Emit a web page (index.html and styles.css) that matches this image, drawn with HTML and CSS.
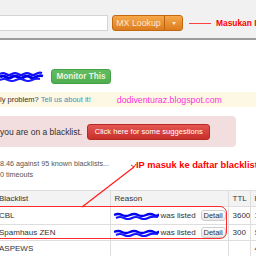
FILE: index.html
```html
<!DOCTYPE html>
<html>
<head>
<meta charset="utf-8">
<link rel="stylesheet" href="styles.css">
</head>
<body>
<header class="top">
  <div class="search">
    <div class="input"></div>
    <div class="btn-group">
      <span class="btn-main">MX Lookup</span>
      <span class="btn-caret"><span class="tri"></span></span>
    </div>
    <span class="note-line"></span>
    <span class="note">Masukan IP</span>
  </div>
</header>

<section class="ip-row">
  <svg class="scribble" width="44" height="14" viewBox="0 0 44 14">
    <path d="M0 4 Q3 2 6 4 T12 4 T18 4 T24 4 T30 4 T36 4 T42 3" fill="none" stroke="#1010ff" stroke-width="2.2"/>
    <path d="M0 7 Q3 5 6 7 T12 7 T18 7 T24 7 T30 7 T36 7 T43 6" fill="none" stroke="#0000e8" stroke-width="2.8"/>
    <path d="M0 10 Q4 8 8 10 T16 10 T24 10 T32 10 T40 9" fill="none" stroke="#1a1aff" stroke-width="2.2"/>
  </svg>
  <span class="btn-green">Monitor This</span>
</section>

<div class="alert-yellow">
  <span class="problem">ly problem? <span class="link">Tell us about it!</span></span>
  <span class="blog">dodiventuraz.blogspot.com</span>
</div>

<div class="alert-pink">
  <span>you are on a blacklist.</span>
  <span class="btn-red">Click here for some suggestions</span>
</div>

<div class="summary">
  <p>8.46 against 95 known blacklists...</p>
  <p>0 timeouts</p>
</div>

<table class="results">
  <colgroup><col class="c1"><col class="c2"><col class="c3"><col class="c4"></colgroup>
  <tr class="head"><td>Blacklist</td><td>Reason</td><td>TTL</td><td>R</td></tr>
  <tr class="r1"><td>CBL</td><td><div class="reason">
    <svg class="scr2" width="45" height="8" viewBox="0 0 45 8"><path d="M0 3 Q4 1 8 3 T16 3 T24 3 T32 3 T40 3 T45 2" fill="none" stroke="#0000ee" stroke-width="2.4"/><path d="M2 6 Q6 4 10 6 T18 6 T26 6 T34 6 T44 5" fill="none" stroke="#1515ff" stroke-width="2.2"/></svg>
    <span>was listed</span><span class="btn-detail">Detail</span></div></td><td>3600</td><td>1</td></tr>
  <tr class="r2"><td>Spamhaus ZEN</td><td><div class="reason">
    <svg class="scr2" width="45" height="8" viewBox="0 0 45 8"><path d="M0 3 Q4 1 8 3 T16 3 T24 3 T32 3 T40 3 T45 2" fill="none" stroke="#0000ee" stroke-width="2.4"/><path d="M2 6 Q6 4 10 6 T18 6 T26 6 T34 6 T44 5" fill="none" stroke="#1515ff" stroke-width="2.2"/></svg>
    <span>was listed</span><span class="btn-detail">Detail</span></div></td><td>300</td><td>S</td></tr>
  <tr class="r3"><td>ASPEWS</td><td></td><td></td><td>4</td></tr>
</table>

<div class="annot-box"></div>
<svg class="annot-arrow" width="256" height="256" viewBox="0 0 256 256">
  <line x1="82" y1="207" x2="134" y2="167" stroke="#ff1a1a" stroke-width="1.2"/>
  <path d="M131 165 L134 167 L136 164" fill="none" stroke="#ff1a1a" stroke-width="1"/>
</svg>
<span class="annot-text">IP masuk ke daftar blacklist</span>
</body>
</html>
```

FILE: styles.css
```css
* { box-sizing: border-box; margin: 0; padding: 0; }
html, body { width: 256px; height: 256px; overflow: hidden; }
body {
  position: relative;
  font-family: "Liberation Sans", Arial, sans-serif;
  font-size: 8.5px;
  color: #333;
  background: #fff;
}

.top {
  height: 40px;
  background: #f1f1f1;
  border-bottom: 2px solid #9b9b9b;
  padding-top: 15px;
}
.search { display: flex; align-items: center; white-space: nowrap; }
.search > * { flex-shrink: 0; }
.input {
  width: 108px;
  height: 16px;
  background: #fff;
  border: 1px solid #d4d4d4;
  border-left: none;
}
.btn-group {
  display: flex;
  margin-left: 4px;
  height: 16px;
  border: 1px solid #c4690f;
  border-radius: 3px;
  background: linear-gradient(#f5a84a, #dc7c1e);
  overflow: hidden;
}
.btn-main {
  width: 52px;
  display: flex;
  align-items: center;
  justify-content: center;
  color: #fde8d2;
  font-size: 8.8px;
  border-right: 1px solid #b9650f;
}
.btn-caret {
  width: 17px;
  display: flex;
  align-items: center;
  justify-content: center;
}
.tri {
  border-left: 2.5px solid transparent;
  border-right: 2.5px solid transparent;
  border-top: 3px solid #fbe6d0;
}
.note-line { width: 22px; height: 1px; background: #ff4040; margin-left: 6px; }
.note { margin-left: 5px; color: #ff0000; font-weight: bold; font-size: 8.4px; }

.ip-row { display: flex; align-items: center; padding-top: 29px; }
.ip-row > * { flex-shrink: 0; }
.scribble { display: block; }
.btn-green {
  margin-left: 7px;
  width: 60px;
  height: 15px;
  display: flex;
  align-items: center;
  justify-content: center;
  background: linear-gradient(#62bd62, #4fae4f);
  border: 1px solid #44a044;
  border-radius: 3px;
  color: #e6f4e6;
  font-weight: bold;
  font-size: 8.2px;
}

.alert-yellow {
  margin-top: 8px;
  height: 15px;
  background: #fcf8e3;
  display: flex;
  align-items: center;
  white-space: nowrap;
  font-size: 7.5px;
}
.alert-yellow > * { flex-shrink: 0; }
.link { color: #3a8fbf; }
.blog { margin-left: 26px; color: #ff33dd; font-size: 8.8px; }

.alert-pink {
  margin-top: 9px;
  width: 236px;
  height: 31px;
  background: #f2dede;
  border-radius: 0 4px 4px 0;
  display: flex;
  align-items: center;
  white-space: nowrap;
  color: #2f2f2f;
}
.alert-pink > * { flex-shrink: 0; }
.btn-red {
  margin-left: 5px;
  width: 123px;
  height: 16px;
  display: flex;
  align-items: center;
  justify-content: center;
  background: linear-gradient(#e5554f, #c8302a);
  border: 1px solid #b52a25;
  border-radius: 3px;
  color: #fff;
  font-size: 7.6px;
}

.summary { padding-top: 11px; line-height: 11px; font-size: 7.2px; color: #555; }

.results {
  margin-top: 10px;
  margin-left: -2px;
  width: 272px;
  border-collapse: collapse;
  table-layout: fixed;
  font-size: 8px;
  white-space: nowrap;
}
.c1 { width: 112px; }
.c2 { width: 118px; }
.c3 { width: 22px; }
.c4 { width: 20px; }
.results td {
  border-top: 1px solid #dedede;
  border-left: 1px solid #dedede;
  padding-left: 4px;
  overflow: hidden;
  vertical-align: middle;
}
.results td:first-child { border-left: none; padding-left: 1px; }
.results .head td { background: #f3f3f3; height: 16px; color: #333; }
.results .r1 td { height: 18px; }
.results .r2 td { height: 16px; }
.results .r3 td { height: 16px; }
.reason { display: flex; align-items: center; }
.reason > * { flex-shrink: 0; }
.scr2 { display: block; margin-right: 2px; margin-left: -1px; }
.btn-detail {
  margin-left: 5px;
  width: 25px;
  height: 11px;
  display: flex;
  align-items: center;
  justify-content: center;
  border: 1px solid #cfcfcf;
  border-radius: 3px;
  background: linear-gradient(#ffffff, #e8e8e8);
  font-size: 7.5px;
}

.annot-box {
  position: absolute;
  left: -10px;
  top: 206px;
  width: 237px;
  height: 33px;
  border: 1.5px solid #ff2a2a;
  border-radius: 7px;
}
.annot-arrow { position: absolute; left: 0; top: 0; }
.annot-text {
  position: absolute;
  left: 136px;
  top: 160px;
  color: #ff0000;
  font-weight: bold;
  font-size: 9.3px;
  white-space: nowrap;
}
```
